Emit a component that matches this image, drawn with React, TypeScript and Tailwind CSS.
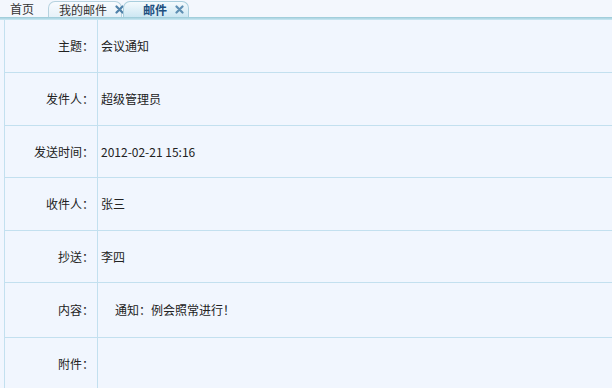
import { ReactNode } from "react"

const rows: { label: string; value: ReactNode; h: string }[] = [
  { label: "主题：", value: "会议通知", h: "h-[53px]" },
  { label: "发件人：", value: "超级管理员", h: "h-[53px]" },
  { label: "发送时间：", value: "2012-02-21 15:16", h: "h-[52px]" },
  { label: "收件人：", value: "张三", h: "h-[53px]" },
  { label: "抄送：", value: "李四", h: "h-[52px]" },
  { label: "内容：", value: <span className="pl-[14px]">通知：例会照常进行！</span>, h: "h-[55px]" },
  { label: "附件：", value: "", h: "h-[53px]" },
]

function Close({ color }: { color: string }) {
  return (
    <svg width="9" height="9" viewBox="0 0 9 9" className="ml-[8px] shrink-0">
      <path d="M1.5 1.5 L7.5 7.5 M7.5 1.5 L1.5 7.5" stroke={color} strokeWidth="2.2" strokeLinecap="round" />
    </svg>
  )
}

export default function App() {
  return (
    <div
      className="w-[612px] h-[388px] overflow-hidden bg-[#f1f6fe] text-[12px] text-[#222]"
      style={{ fontFamily: '"Noto Sans CJK SC", "Noto Sans", sans-serif' }}
    >
      {/* tabs */}
      <div className="h-[17px] flex items-end bg-[#f3f7fd] leading-none whitespace-nowrap">
        <div className="h-[16px] shrink-0 flex items-center pl-[10px] w-[48px] text-[#333]">首页</div>
        <div className="h-[16px] w-[74px] shrink-0 flex items-center pl-[10px] border border-b-0 border-[#b6d2df] rounded-tl-[7px] rounded-tr-[7px] bg-gradient-to-b from-[#f8fbff] to-[#e6f1f8] text-[#333]">
          我的邮件
          <Close color="#4f81a9" />
        </div>
        <div className="h-[16px] w-[66px] shrink-0 ml-[1px] flex items-center pl-[19px] border border-b-0 border-[#a9cedd] rounded-tl-[7px] rounded-tr-[7px] bg-gradient-to-b from-[#f4fafd] to-[#cde7f3] text-[#1d4f7f] font-bold">
          邮件
          <Close color="#5e8fb3" />
        </div>
      </div>
      <div className="h-[3px] bg-gradient-to-b from-[#99c9d6] to-[#cbe8f4]" />

      {/* table */}
      <div className="ml-[4px] border-l border-[#c3e0ef]">
        {rows.map((r) => (
          <div key={r.label} className={`flex border-b border-[#c3e0ef] ${r.h}`}>
            <div className="w-[93px] shrink-0 border-r border-[#c3e0ef] flex items-center justify-end pr-[3px]">
              {r.label}
            </div>
            <div className="flex-1 flex items-center pl-[3px]">{r.value}</div>
          </div>
        ))}
      </div>
    </div>
  )
}
